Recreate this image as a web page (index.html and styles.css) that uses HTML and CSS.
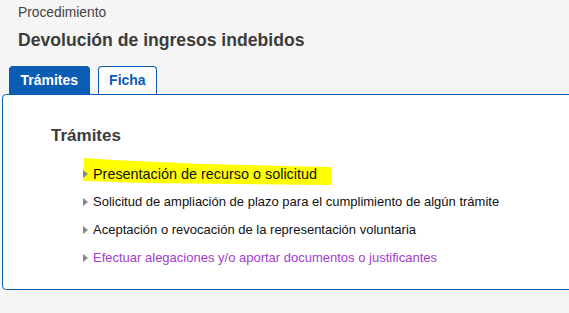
FILE: index.html
```html
<!DOCTYPE html>
<html lang="es">
<head>
    <meta charset="UTF-8">
    <meta name="viewport" content="width=device-width, initial-scale=1.0">
    <title>Devolución de ingresos indebidos</title>
    <link rel="stylesheet" href="styles.css">
</head>
<body>
    <div class="header">
        <div class="kicker">Procedimiento</div>
        <h1 class="title">Devolución de ingresos indebidos</h1>
    </div>
    <div class="tabs">
        <a href="#" class="tab active">Trámites</a>
        <a href="#" class="tab">Ficha</a>
    </div>
    <div class="panel">
        <h2 class="panel-title">Trámites</h2>
        <ul class="tramites">
            <li class="marked">
                <svg class="marker" width="250" height="28" viewBox="0 0 250 28"><polygon points="1,0 30,2 120,6 200,8 248,9 249,27 150,26 60,25 0,23" fill="#ffff00"/></svg>
                <a href="#">Presentación de recurso o solicitud</a>
            </li>
            <li><a href="#">Solicitud de ampliación de plazo para el cumplimiento de algún trámite</a></li>
            <li><a href="#">Aceptación o revocación de la representación voluntaria</a></li>
            <li><a href="#" class="visited">Efectuar alegaciones y/o aportar documentos o justificantes</a></li>
        </ul>
    </div>
</body>
</html>
```

FILE: styles.css
```css
html {
    overflow: hidden;
}

body {
    margin: 0;
    font-family: "Liberation Sans", Arial, sans-serif;
    background-color: #f5f5f5;
    color: #222;
    width: 600px;
}

.header {
    padding: 5px 18px 0;
}

.kicker {
    font-size: 13.8px;
    color: #444;
    line-height: 15px;
}

.title {
    font-size: 17.6px;
    font-weight: bold;
    color: #3c3c3c;
    margin: 9px 0 0;
    line-height: 22px;
}

.tabs {
    display: flex;
    gap: 8px;
    padding: 15px 0 0 9px;
}

.tab {
    display: block;
    font-size: 14px;
    font-weight: bold;
    text-decoration: none;
    color: #0a5cb4;
    background-color: white;
    border: 1px solid #0a5cb4;
    border-bottom: none;
    border-radius: 4px 4px 0 0;
    padding: 0 10.5px;
    line-height: 27px;
}

.tab.active {
    background-color: #0a5cb4;
    color: white;
}

.panel {
    margin-left: 2px;
    background-color: white;
    border: 1px solid #0a5cb4;
    border-radius: 4px;
    height: 196px;
    box-sizing: border-box;
    padding: 31px 0 0 48px;
}

.panel-title {
    font-size: 17px;
    font-weight: bold;
    color: #3c3c3c;
    margin: 0 0 19px;
    line-height: 20px;
}

.tramites {
    list-style: none;
    margin: 0;
    padding: 0 0 0 31px;
}

.tramites li {
    position: relative;
    font-size: 13px;
    line-height: 18px;
    margin-bottom: 10px;
    padding-left: 11px;
}

.tramites li.marked {
    font-size: 14.4px;
}

.tramites li::before {
    content: "";
    position: absolute;
    z-index: 1;
    left: 1px;
    top: 5px;
    border-left: 5px solid #888;
    border-top: 4px solid transparent;
    border-bottom: 4px solid transparent;
}

.tramites a {
    position: relative;
    color: #111;
    text-decoration: none;
}

.tramites a.visited {
    color: #a23dc8;
}

.marker {
    position: absolute;
    left: 1px;
    top: -7px;
}
```
